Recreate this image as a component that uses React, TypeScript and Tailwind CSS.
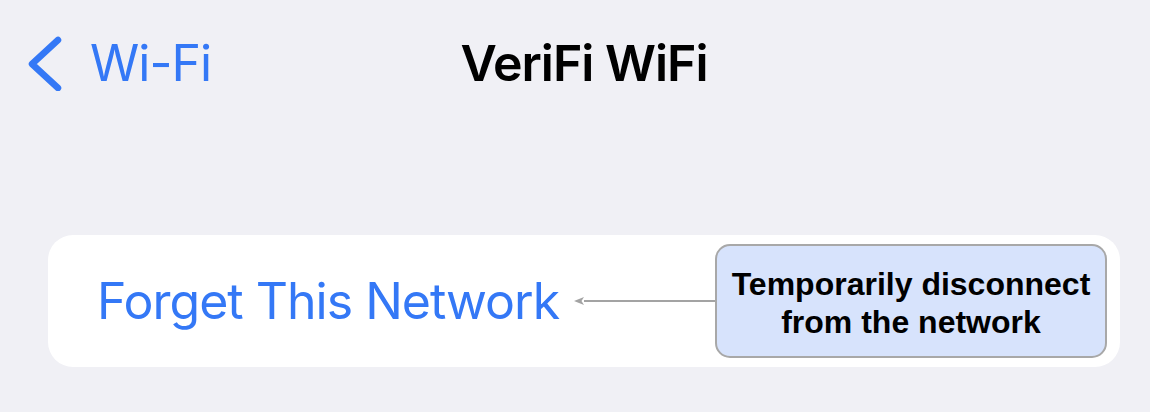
export default function App() {
  return (
    <div className="w-[1150px] h-[412px] bg-[#f0f0f5] overflow-hidden font-['Inter',sans-serif]">
      <div className="grid grid-cols-[1fr_auto_1fr] items-center pl-[28px] pr-[10px] pt-[30px] h-[96px]">
        <div className="flex items-center text-[#3478f6]">
          <svg width="34" height="56" viewBox="0 0 34 56" className="shrink-0">
            <path
              d="M30 5 L4 29 L30 53"
              fill="none"
              stroke="#3478f6"
              strokeWidth="6.5"
              strokeLinecap="round"
              strokeLinejoin="round"
            />
          </svg>
          <span className="ml-[28px] text-[50px] tracking-[-0.02em] leading-none">Wi-Fi</span>
        </div>
        <div className="text-[50px] font-semibold tracking-[-0.02em] leading-none text-black">VeriFi WiFi</div>
        <div />
      </div>

      <div className="mt-[139px] mx-[48px] h-[132px] w-[1072px] rounded-[25px] bg-white flex items-center pl-[49px] pr-[13px]">
        <span className="text-[50px] tracking-[-0.02em] leading-none text-[#3478f6] whitespace-nowrap">
          Forget This Network
        </span>
        <div className="flex-1 ml-[15px] flex items-center">
          <svg width="10" height="8" viewBox="0 0 10 8" className="shrink-0">
            <path d="M0 4 L10 0 L7.5 4 L10 8 Z" fill="#a3a3a3" />
          </svg>
          <div className="flex-1 h-[1.5px] bg-[#a3a3a3]" />
        </div>
        <div className="w-[392px] h-[114px] shrink-0 rounded-[15px] border-2 border-[#a8a8a8] bg-[#d7e3fc] flex items-center justify-center pt-[3px] text-center font-['Liberation_Sans',sans-serif] font-bold text-[32px] leading-[38px] text-black">
          Temporarily disconnect
          <br />
          from the network
        </div>
      </div>
    </div>
  );
}
